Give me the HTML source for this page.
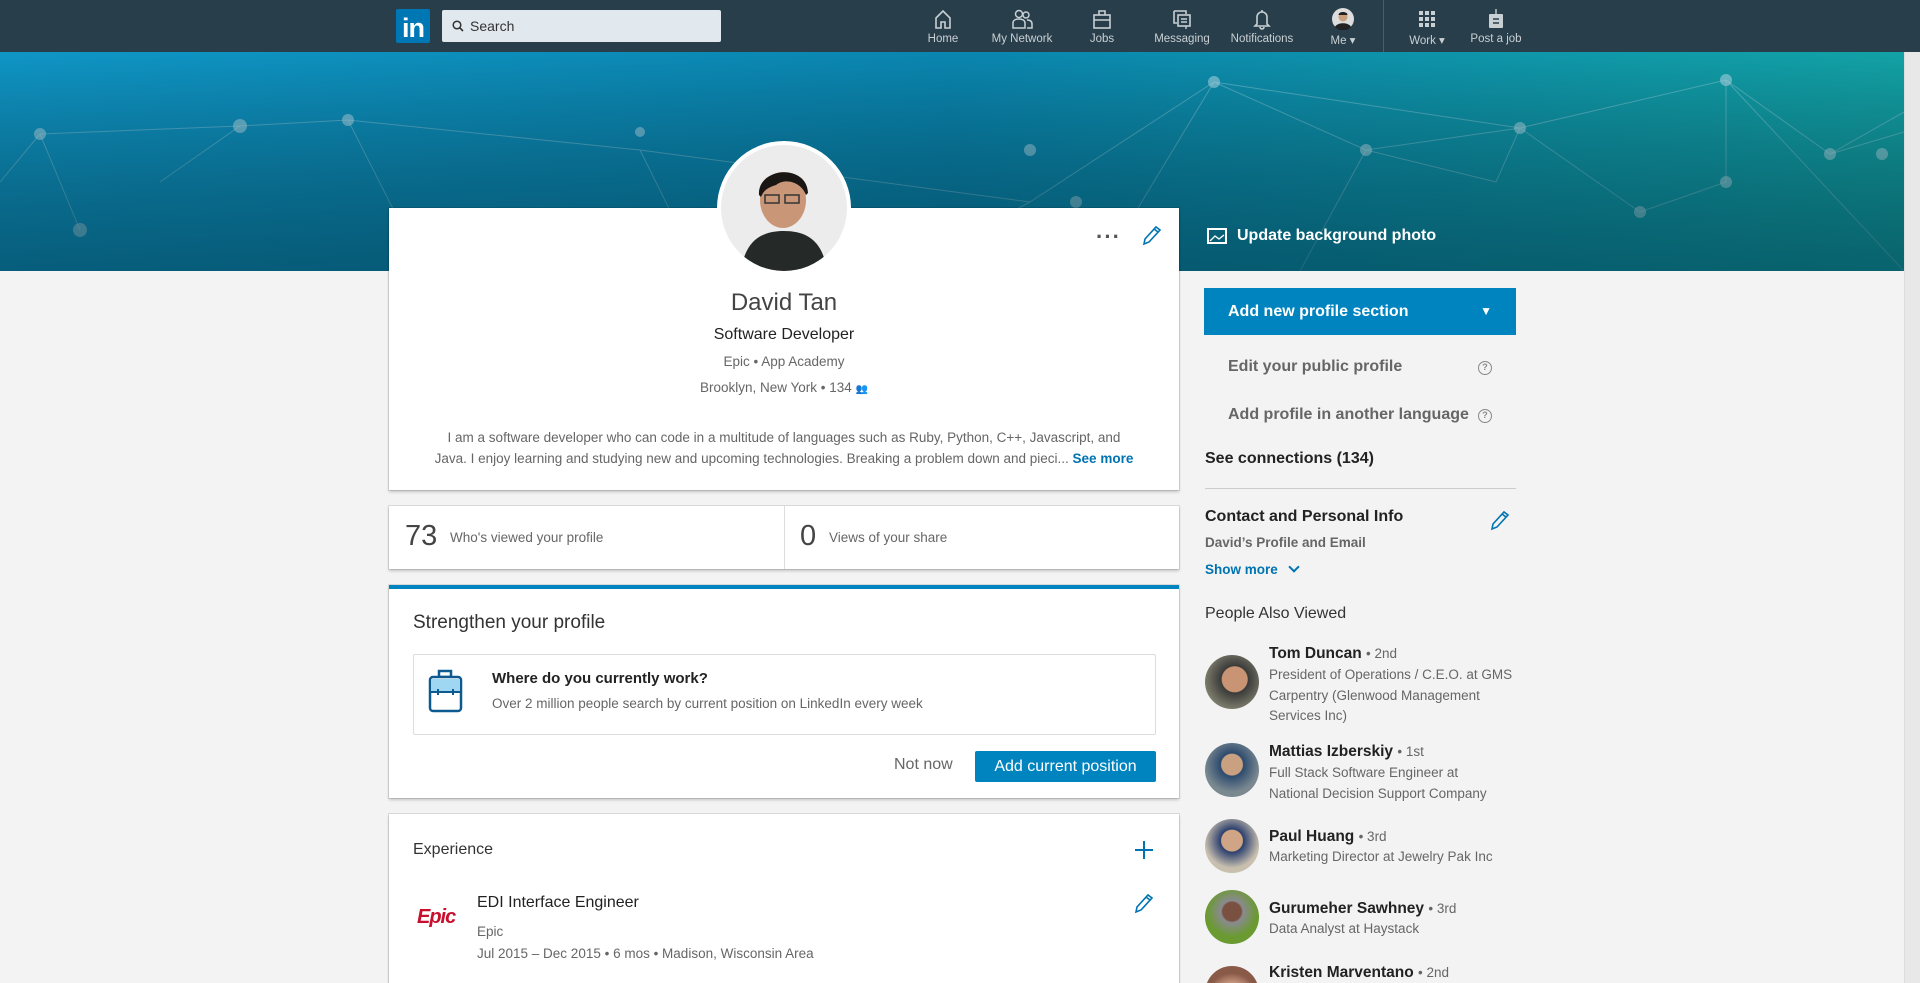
<!DOCTYPE html>
<html><head><meta charset="utf-8"><style>
*{box-sizing:border-box;margin:0;padding:0}
html,body{width:1920px;height:983px;overflow:hidden}
body{background:#f3f3f3;font-family:"Liberation Sans",sans-serif;position:relative;color:#333}
.a{position:absolute;white-space:nowrap}
.nav{position:absolute;left:0;top:0;width:1920px;height:52px;background:#283e4a}
.ni{position:absolute;top:8px;width:80px;margin-left:-40px;text-align:center;color:#c9d0d4;font-size:11.5px}
.ni svg{display:block;margin:0 auto 3px;height:22px}
.card{position:absolute;background:#fff;box-shadow:0 0 0 1px rgba(0,0,0,.1),0 2px 3px rgba(0,0,0,.2)}
.blue{color:#0073b1}
.gray{color:#666}
.av{position:absolute;width:54px;height:54px;border-radius:50%;left:1205px}
</style></head><body>
<div class="nav">
 <div class="a" style="left:396px;top:9px;width:34px;height:34px;background:#0077b5;border-radius:2px;color:#fff;font-weight:bold;font-size:27px;line-height:38px;text-align:center;letter-spacing:-1px">in</div>
 <div class="a" style="left:442px;top:10px;width:279px;height:32px;background:#e1e9ee;border-radius:2px;font-size:14px;color:#333;line-height:32px;padding-left:28px">Search
  <svg style="position:absolute;left:10px;top:10px" width="12" height="12" viewBox="0 0 12 12"><circle cx="5" cy="5" r="3.8" fill="none" stroke="#333" stroke-width="1.5"/><path d="M8 8l3 3" stroke="#333" stroke-width="1.6"/></svg></div>
 <div class="ni" style="left:943px"><svg width="22" viewBox="0 0 22 22"><path d="M4 10L11 3l7 7v10h-5v-6h-4v6H4z" fill="none" stroke="#c9d0d4" stroke-width="1.6"/></svg>Home</div>
 <div class="ni" style="left:1022px"><svg width="24" viewBox="0 0 24 22"><circle cx="9" cy="6" r="3.5" fill="none" stroke="#c9d0d4" stroke-width="1.5"/><path d="M3 20v-5c0-3 3-4 6-4s6 1 6 4v5z" fill="none" stroke="#c9d0d4" stroke-width="1.5"/><circle cx="16" cy="7" r="3" fill="none" stroke="#c9d0d4" stroke-width="1.5"/><path d="M17 12c3 0 5 1 5 4v4h-5" fill="none" stroke="#c9d0d4" stroke-width="1.5"/></svg>My Network</div>
 <div class="ni" style="left:1102px"><svg width="22" viewBox="0 0 22 22"><rect x="3" y="7" width="16" height="13" fill="none" stroke="#c9d0d4" stroke-width="1.6"/><path d="M8 7V3h6v4M3 12h16" fill="none" stroke="#c9d0d4" stroke-width="1.6"/></svg>Jobs</div>
 <div class="ni" style="left:1182px"><svg width="22" viewBox="0 0 22 22"><path d="M3 3h12v3M3 3v12h3" fill="none" stroke="#c9d0d4" stroke-width="1.6"/><rect x="7" y="7" width="12" height="11" fill="none" stroke="#c9d0d4" stroke-width="1.6"/><path d="M10 11h6M10 14h6M15 18v3" stroke="#c9d0d4" stroke-width="1.4"/></svg>Messaging</div>
 <div class="ni" style="left:1262px"><svg width="22" viewBox="0 0 22 22"><path d="M6 16V9a5 5 0 0110 0v7l2 2H4z M9 19a2 2 0 004 0M11 2v2" fill="none" stroke="#c9d0d4" stroke-width="1.6"/></svg>Notifications</div>
 <div class="ni" style="left:1343px"><svg width="22" viewBox="0 0 22 22"><circle cx="11" cy="11" r="11" fill="#ddd"/><circle cx="11" cy="9" r="4.5" fill="#c9a07c"/><path d="M6.5 7c0-4 9-4 9 0z" fill="#222"/><path d="M3 19c2-5 14-5 16 0a11 11 0 01-16 0z" fill="#222"/></svg>Me ▾</div>
 <div class="a" style="left:1383px;top:0;width:1px;height:52px;background:#4b5d67"></div>
 <div class="ni" style="left:1427px"><svg width="22" viewBox="0 0 22 22" fill="#c9d0d4"><rect x="3" y="3" width="4" height="4"/><rect x="9" y="3" width="4" height="4"/><rect x="15" y="3" width="4" height="4"/><rect x="3" y="9" width="4" height="4"/><rect x="9" y="9" width="4" height="4"/><rect x="15" y="9" width="4" height="4"/><rect x="3" y="15" width="4" height="4"/><rect x="9" y="15" width="4" height="4"/><rect x="15" y="15" width="4" height="4"/></svg>Work ▾</div>
 <div class="ni" style="left:1496px"><svg width="22" viewBox="0 0 22 22"><path d="M11 1v5" stroke="#c9d0d4" stroke-width="1.4"/><rect x="4" y="6" width="14" height="14" rx="1" fill="#c9d0d4"/><path d="M8 11h6M8 15h6" stroke="#283e4a" stroke-width="1.6"/></svg>Post a job</div>
</div>
<svg class="a" style="left:0;top:52px" width="1904" height="219" viewBox="0 0 1904 219">
 <defs><linearGradient id="g" x1="0" y1="0" x2="1" y2="0"><stop offset="0" stop-color="#0f96c6"/><stop offset=".5" stop-color="#0a86b0"/><stop offset="1" stop-color="#12a2a6"/></linearGradient>
 <linearGradient id="v" x1="0" y1="0" x2="0" y2="1"><stop offset="0" stop-color="#000" stop-opacity="0"/><stop offset="1" stop-color="#00303f" stop-opacity=".55"/></linearGradient></defs>
 <rect width="1904" height="219" fill="url(#g)"/>
 <g stroke="#9fd3e3" stroke-opacity=".45" stroke-width="1" fill="none">
 <path d="M40 82L240 74 348 68 640 98 1030 150 1214 30 1520 76 1726 28 1830 102 1904 60M40 82L80 178M240 74L160 130M348 68L420 210M348 68L640 98M1214 30L1366 98 1520 76 1496 130 1366 98M1726 28L1726 130 1640 160M1830 102L1904 80M1030 150L900 219M1520 76L1640 160M1214 30L1100 219M1726 28L1904 219M0 130L40 82M1366 98L1300 219M640 98L700 219"/>
 </g>
 <g fill="#b8e0ec" fill-opacity=".55">
 <circle cx="40" cy="82" r="6"/><circle cx="240" cy="74" r="7"/><circle cx="348" cy="68" r="6"/><circle cx="80" cy="178" r="7"/><circle cx="1214" cy="30" r="6"/><circle cx="1520" cy="76" r="6"/><circle cx="1726" cy="28" r="6"/><circle cx="1830" cy="102" r="6"/><circle cx="1366" cy="98" r="6"/><circle cx="1640" cy="160" r="6"/><circle cx="1030" cy="98" r="6"/><circle cx="1076" cy="150" r="6"/><circle cx="1882" cy="102" r="6"/><circle cx="1726" cy="130" r="6"/><circle cx="640" cy="80" r="5"/></g>
 <rect width="1904" height="219" fill="url(#v)"/>
</svg>
<div class="a" style="left:1904px;top:52px;width:16px;height:931px;background:#e8e8e8;border-left:1px solid #ddd"></div>

<div class="card" style="left:389px;top:208px;width:790px;height:282px"></div>
<div class="a" style="left:717px;top:141px;width:134px;height:134px;border-radius:50%;background:#fff;padding:4px"><svg width="126" height="126" viewBox="0 0 126 126"><clipPath id="c"><circle cx="63" cy="63" r="63"/></clipPath><g clip-path="url(#c)"><rect width="126" height="126" fill="#ececec"/><path d="M20 126c4-30 20-40 43-40s39 10 43 40z" fill="#252a28"/><ellipse cx="62" cy="55" rx="23" ry="28" fill="#c99677"/><path d="M38 50c-2-28 48-32 49-2l-2 2c-4-12-20-18-30-10-6 2-12 4-15 12z" fill="#1a1614"/><path d="M44 50h14v8H44zM64 50h14v8H64z" fill="none" stroke="#333" stroke-width="1.5"/></g></svg></div>
<div class="a" style="left:1096px;top:224px;font-size:22px;color:#555;letter-spacing:1px;font-weight:bold">···</div>
<svg class="a" style="left:1141px;top:225px" width="20" height="22" viewBox="0 0 20 22"><path d="M3 19l1-5L15 2l4 3L8 17z M13 4l4 3" fill="none" stroke="#0073b1" stroke-width="1.6"/></svg>
<div class="a" style="left:389px;width:790px;text-align:center;top:289px;font-size:24px;color:#444">David Tan</div>
<div class="a" style="left:389px;width:790px;text-align:center;top:326px;font-size:16px;color:#222">Software Developer</div>
<div class="a" style="left:389px;width:790px;text-align:center;top:354px;font-size:13.5px;color:#666">Epic • App Academy</div>
<div class="a" style="left:389px;width:790px;text-align:center;top:380px;font-size:13.5px;color:#666">Brooklyn, New York • 134 <span style="font-size:10px">👥</span></div>
<div class="a" style="left:389px;width:790px;text-align:center;top:427px;font-size:13.5px;color:#666;line-height:21px">I am a software developer who can code in a multitude of languages such as Ruby, Python, C++, Javascript, and<br>Java. I enjoy learning and studying new and upcoming technologies. Breaking a problem down and pieci... <b style="color:#0073b1">See more</b></div>

<div class="card" style="left:389px;top:506px;width:790px;height:63px"></div>
<div class="a" style="left:784px;top:506px;width:1px;height:63px;background:#ddd"></div>
<div class="a" style="left:405px;top:520px;font-size:29px;color:#444;font-weight:300">73</div>
<div class="a" style="left:450px;top:530px;font-size:13.5px;color:#666">Who's viewed your profile</div>
<div class="a" style="left:800px;top:520px;font-size:29px;color:#444">0</div>
<div class="a" style="left:829px;top:530px;font-size:13.5px;color:#666">Views of your share</div>

<div class="card" style="left:389px;top:585px;width:790px;height:213px;border-top:4px solid #0084bf"></div>
<div class="a" style="left:413px;top:612px;font-size:19px;color:#333">Strengthen your profile</div>
<div class="a" style="left:413px;top:654px;width:743px;height:81px;border:1px solid #ddd;border-radius:2px"></div>
<svg class="a" style="left:428px;top:669px" width="35" height="45" viewBox="0 0 35 45"><rect x="11" y="2" width="12" height="6" fill="none" stroke="#0c5a8f" stroke-width="2.5"/><rect x="2" y="8" width="31" height="34" rx="3" fill="#fff" stroke="#0c5a8f" stroke-width="2.5"/><path d="M3 10h29v13H3z" fill="#9fd6f2"/><path d="M2 23h31M10 20v6M25 20v6" stroke="#0c5a8f" stroke-width="2"/></svg>
<div class="a" style="left:492px;top:670px;font-size:15px;color:#222;font-weight:bold">Where do you currently work?</div>
<div class="a" style="left:492px;top:696px;font-size:13.5px;color:#666">Over 2 million people search by current position on LinkedIn every week</div>
<div class="a" style="left:894px;top:756px;font-size:16px;color:#666">Not now</div>
<div class="a" style="left:975px;top:751px;width:181px;height:31px;background:#0084bf;border-radius:2px;color:#fff;font-size:16px;line-height:31px;text-align:center">Add current position</div>

<div class="card" style="left:389px;top:814px;width:790px;height:300px"></div>
<div class="a" style="left:413px;top:841px;font-size:16px;color:#333">Experience</div>
<svg class="a" style="left:1134px;top:840px" width="20" height="20"><path d="M10 1v18M1 10h18" stroke="#0073b1" stroke-width="2"/></svg>
<div class="a" style="left:417px;top:906px;font-size:20px;color:#c8102e;font-weight:bold;font-style:italic;letter-spacing:-1px">Epic</div>
<div class="a" style="left:477px;top:894px;font-size:16px;color:#222">EDI Interface Engineer</div>
<div class="a" style="left:477px;top:924px;font-size:13.5px;color:#666">Epic</div>
<div class="a" style="left:477px;top:946px;font-size:13.5px;color:#666">Jul 2015 – Dec 2015 • 6 mos • Madison, Wisconsin Area</div>
<svg class="a" style="left:1133px;top:893px" width="20" height="22" viewBox="0 0 20 22"><path d="M3 19l1-5L15 2l4 3L8 17z M13 4l4 3" fill="none" stroke="#0073b1" stroke-width="1.6"/></svg>

<svg class="a" style="left:1207px;top:228px" width="20" height="16"><rect x="1" y="1" width="18" height="14" fill="none" stroke="#fff" stroke-width="2"/><path d="M3 13l5-5 4 3 5-4" fill="none" stroke="#fff" stroke-width="1.4"/></svg>
<div class="a" style="left:1237px;top:227px;font-size:16px;color:#fff;font-weight:bold">Update background photo</div>
<div class="a" style="left:1204px;top:288px;width:312px;height:47px;background:#0084bf;color:#fff;font-size:16px;font-weight:bold;line-height:47px;padding-left:24px">Add new profile section<span style="position:absolute;right:24px;top:0;font-size:12px">▼</span></div>
<div class="a" style="left:1228px;top:358px;font-size:16px;color:#666;font-weight:bold">Edit your public profile</div>
<div class="a" style="left:1478px;top:361px;width:14px;height:14px;border:1.5px solid #888;border-radius:50%;font-size:9px;color:#888;text-align:center;line-height:11px;font-weight:bold">?</div>
<div class="a" style="left:1228px;top:406px;font-size:16px;color:#666;font-weight:bold">Add profile in another language</div>
<div class="a" style="left:1478px;top:409px;width:14px;height:14px;border:1.5px solid #888;border-radius:50%;font-size:9px;color:#888;text-align:center;line-height:11px;font-weight:bold">?</div>
<div class="a" style="left:1205px;top:450px;font-size:16px;color:#222;font-weight:bold">See connections (134)</div>
<div class="a" style="left:1205px;top:488px;width:311px;height:1px;background:#ccc"></div>
<div class="a" style="left:1205px;top:508px;font-size:16px;color:#222;font-weight:bold">Contact and Personal Info</div>
<svg class="a" style="left:1489px;top:510px" width="20" height="22" viewBox="0 0 20 22"><path d="M3 19l1-5L15 2l4 3L8 17z M13 4l4 3" fill="none" stroke="#0073b1" stroke-width="1.6"/></svg>
<div class="a" style="left:1205px;top:535px;font-size:13.5px;color:#666;font-weight:bold">David’s Profile and Email</div>
<div class="a" style="left:1205px;top:562px;font-size:13.5px;color:#0073b1;font-weight:bold">Show more <span style="display:inline-block;width:8px;height:8px;border-right:2px solid #0073b1;border-bottom:2px solid #0073b1;transform:rotate(45deg);margin:0 0 3px 8px"></span></div>
<div class="a" style="left:1205px;top:605px;font-size:16px;color:#333">People Also Viewed</div>

<div class="av" style="top:655px;background:radial-gradient(circle at 55% 45%,#c99473 30%,#3a3a3a 32%,#7a7a6a 70%)"></div>
<div class="a" style="left:1269px;top:645px;font-size:15.5px;color:#222;font-weight:bold">Tom Duncan <span style="font-weight:normal;color:#666;font-size:13.5px">• 2nd</span></div>
<div class="a" style="left:1269px;top:665px;font-size:13.5px;color:#666;line-height:20.5px">President of Operations / C.E.O. at GMS<br>Carpentry (Glenwood Management<br>Services Inc)</div>
<div class="av" style="top:743px;background:radial-gradient(circle at 50% 40%,#c9a080 25%,#2c4a6e 27%,#7a8890 65%)"></div>
<div class="a" style="left:1269px;top:743px;font-size:15.5px;color:#222;font-weight:bold">Mattias Izberskiy <span style="font-weight:normal;color:#666;font-size:13.5px">• 1st</span></div>
<div class="a" style="left:1269px;top:763px;font-size:13.5px;color:#666;line-height:20.5px">Full Stack Software Engineer at<br>National Decision Support Company</div>
<div class="av" style="top:819px;background:radial-gradient(circle at 50% 40%,#d0a585 25%,#2b3f6e 27%,#c8bfae 65%)"></div>
<div class="a" style="left:1269px;top:828px;font-size:15.5px;color:#222;font-weight:bold">Paul Huang <span style="font-weight:normal;color:#666;font-size:13.5px">• 3rd</span></div>
<div class="a" style="left:1269px;top:849px;font-size:13.5px;color:#666">Marketing Director at Jewelry Pak Inc</div>
<div class="av" style="top:890px;background:radial-gradient(circle at 50% 40%,#7a5040 22%,#8a8a90 26%,#6a9a30 60%)"></div>
<div class="a" style="left:1269px;top:900px;font-size:15.5px;color:#222;font-weight:bold">Gurumeher Sawhney <span style="font-weight:normal;color:#666;font-size:13.5px">• 3rd</span></div>
<div class="a" style="left:1269px;top:921px;font-size:13.5px;color:#666">Data Analyst at Haystack</div>
<div class="av" style="top:966px;background:radial-gradient(circle at 50% 60%,#d8a890 30%,#8a5a48 60%)"></div>
<div class="a" style="left:1269px;top:964px;font-size:15.5px;color:#222;font-weight:bold">Kristen Marventano <span style="font-weight:normal;color:#666;font-size:13.5px">• 2nd</span></div>
</body></html>
